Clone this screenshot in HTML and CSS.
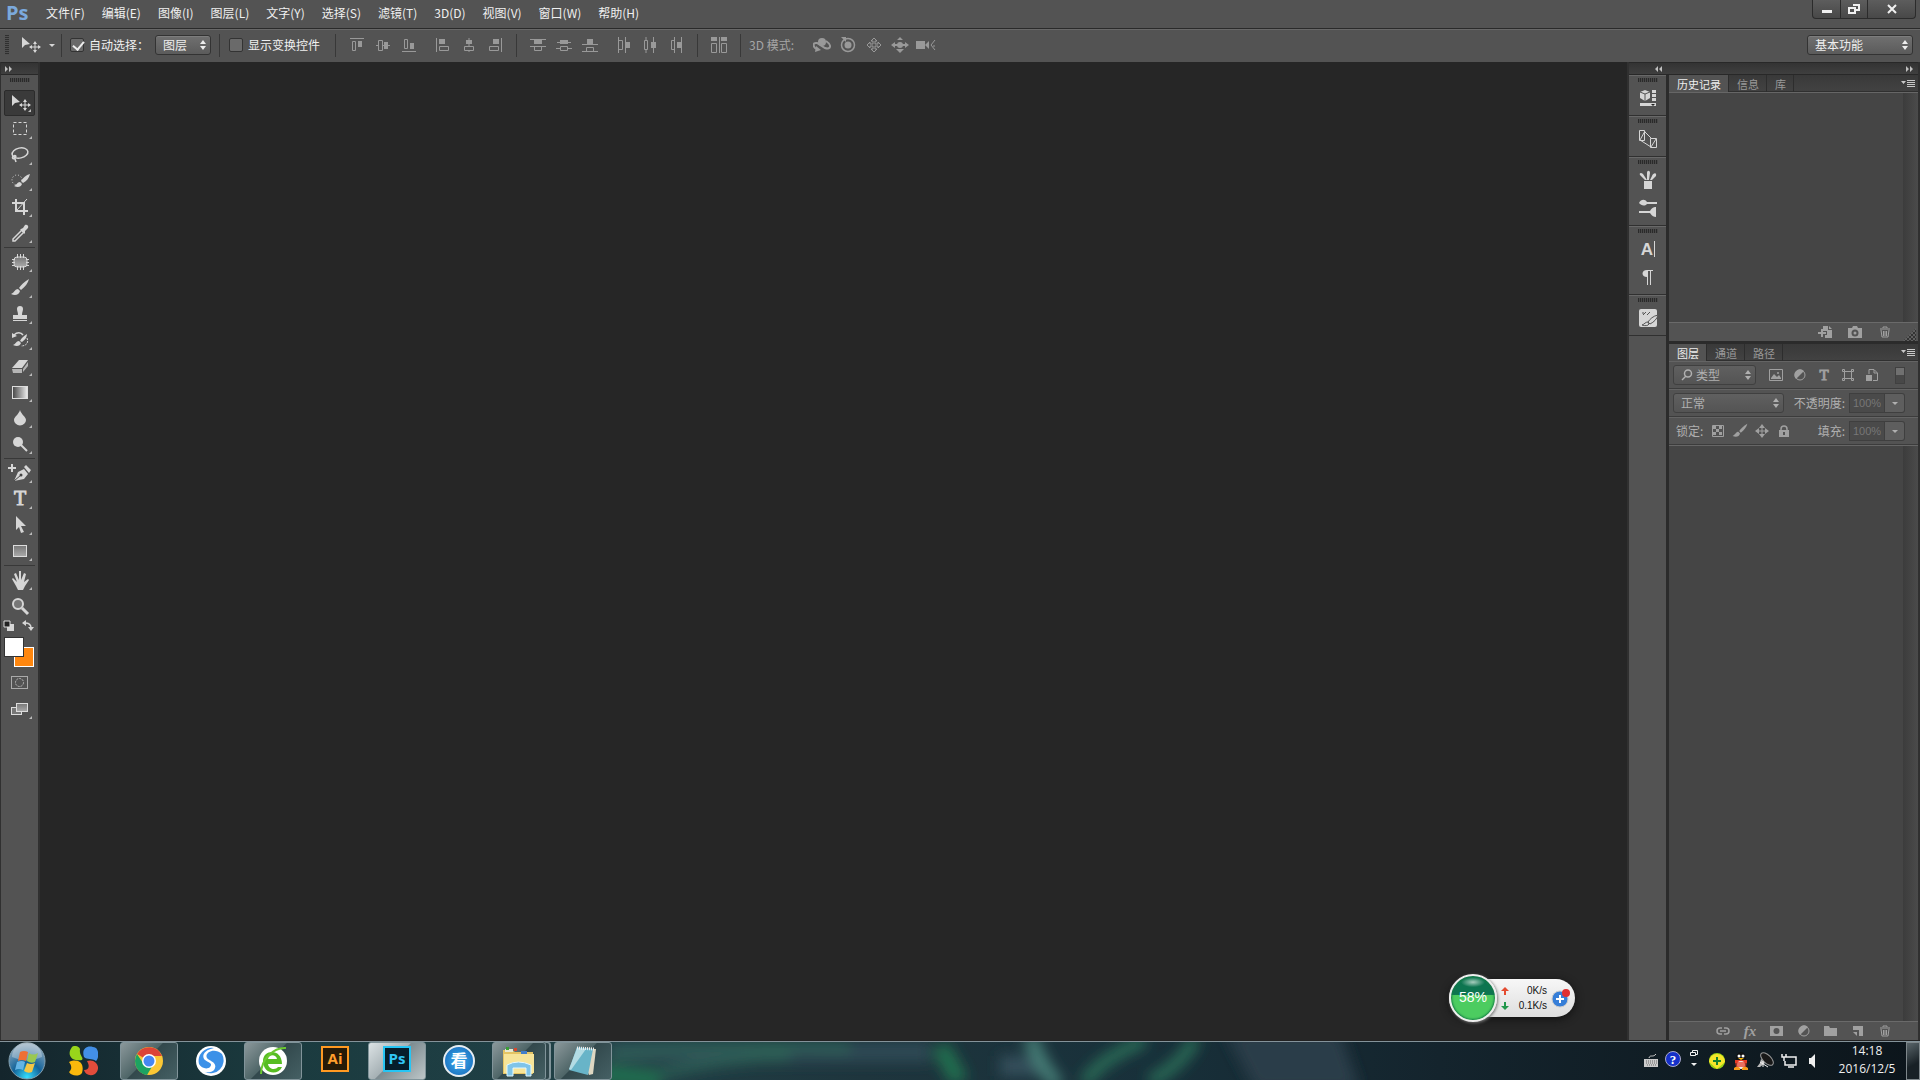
FILE: index.html
```
<!DOCTYPE html>
<html lang="zh-CN">
<head>
  <meta charset="UTF-8">
  <title>Photoshop</title>
  <link rel="stylesheet" href="styles.css">
</head>
<body>
  <!-- shared icons -->
  <svg class="defs" width="0" height="0" aria-hidden="true">
    <defs>
      <linearGradient id="fade"><stop offset="0" stop-color="#444"/><stop offset="1" stop-color="#eee"/></linearGradient>
      <linearGradient id="grey" x2="0" y2="1"><stop offset="0" stop-color="#777"/><stop offset="1" stop-color="#aaa"/></linearGradient>
      <radialGradient id="orb" cy=".95" r=".9"><stop offset="0" stop-color="#36e0ff"/><stop offset=".45" stop-color="#13639a"/><stop offset="1" stop-color="#8fa9bd"/></radialGradient>
      <filter id="soft" x="-5%" y="-50%" width="110%" height="200%"><feGaussianBlur stdDeviation="7"/></filter>
      <symbol id="updown" viewBox="0 0 6 10"><path d="M3 0L6 4H0zM3 10L0 6H6z"/></symbol>
      <symbol id="move" viewBox="0 0 22 22"><path d="M3 3v11l3-3 5-1z"/><path d="M16 8v10M11 13h10" stroke="currentColor"/><path d="M16 7l-2 3h4zM16 19l-2-3h4zM10 13l3-2v4zM22 13l-3-2v4z"/></symbol>
      <symbol id="trash" viewBox="0 0 12 12"><path d="M1 3h10M4 2V1h4v1M2 4l1 7h6l1-7M4.500 5v5M6 5v5M7.500 5v5" fill="none" stroke="currentColor"/></symbol>
      <symbol id="menu" viewBox="0 0 14 8"><path d="M0 1h5L2.500 4zM6 0h8v1H6zM6 2h8v1H6zM6 4h8v1H6zM6 6h8v1H6z"/></symbol>
      <symbol id="left2" viewBox="0 0 8 6"><path d="M3 0v6L0 3zM7 0v6L4 3z"/></symbol>
      <symbol id="right2" viewBox="0 0 8 6"><path d="M0 0v6l3-3zM4 0v6l3-3z"/></symbol>
      <symbol id="brush" viewBox="0 0 22 22"><path d="M20 2c-5 3-8 6-10 9l2 2c4-3 7-7 8-11zM9 12c-3 0-3 3-7 5 4 2 8 1 9-3z"/></symbol>
    </defs>
  </svg>

  <header class="menubar">
    <span class="logo">Ps</span>
    <nav>
      <a href="#">文件(F)</a><a href="#">编辑(E)</a><a href="#">图像(I)</a><a href="#">图层(L)</a><a href="#">文字(Y)</a><a href="#">选择(S)</a><a href="#">滤镜(T)</a><a href="#">3D(D)</a><a href="#">视图(V)</a><a href="#">窗口(W)</a><a href="#">帮助(H)</a>
    </nav>
    <div class="window-buttons">
      <button aria-label="最小化"><svg width="12" height="10"><path d="M1 6h10v3H1z"/></svg></button>
      <button aria-label="还原"><svg width="12" height="10"><path d="M5 1h6v5H7M1 4h6v5H1z" fill="none" stroke="currentColor" stroke-width="2"/></svg></button>
      <button class="close" aria-label="关闭"><svg width="10" height="10"><path d="M1 1l8 8M9 1L1 9" stroke="currentColor" stroke-width="2"/></svg></button>
    </div>
  </header>

  <section class="options">
    <i class="vgrip"></i>
    <button class="current-tool" aria-label="移动工具"><svg width="22" height="22"><use href="#move"/></svg><svg width="6" height="3"><path d="M0 0h6L3 3z"/></svg></button>
    <i class="divider first"></i>
    <label class="check"><input type="checkbox" checked>自动选择：</label>
    <span class="drop auto"><select aria-label="自动选择"><option>图层</option></select><svg width="6" height="10"><use href="#updown"/></svg></span>
    <i class="divider"></i>
    <label class="check show"><input type="checkbox">显示变换控件</label>
    <i class="divider"></i>
    <div class="align">
      <button aria-label="顶对齐"><svg width="14" height="14"><path class="o" d="M0 .5h14M2.500 3.500h3v9h-3z"/><path d="M8 3h4v6H8z"/></svg></button>
      <button aria-label="垂直居中对齐"><svg width="14" height="14"><path class="o" d="M0 7.500h3M6 7.500h8M2.500 2.500h4v10h-4z"/><path d="M8 4h4v7H8z"/></svg></button>
      <button aria-label="底对齐"><svg width="14" height="14"><path class="o" d="M0 13.500h14M2.500 1.500h3v9h-3z"/><path d="M8 5h4v6H8z"/></svg></button>
    </div>
    <div class="align">
      <button aria-label="左对齐"><svg width="14" height="14"><path class="o" d="M.5 0v14M3.500 8.500h9v4h-9z"/><path d="M3 1h6v5H3z"/></svg></button>
      <button aria-label="水平居中对齐"><svg width="14" height="14"><path class="o" d="M7 0v8M7 12v2M2.500 8.500h9v4h-9z"/><path d="M4 2h6v4H4z"/></svg></button>
      <button aria-label="右对齐"><svg width="14" height="14"><path class="o" d="M13.500 0v14M1.500 8.500h9v4h-9z"/><path d="M5 1h6v5H5z"/></svg></button>
    </div>
    <i class="divider"></i>
    <div class="align">
      <button aria-label="按顶分布"><svg width="16" height="14"><path class="o" d="M0 1.500h16M0 8.500h16M4.500 8.500h7v4h-7z"/><path d="M4 2h8v4H4z"/></svg></button>
      <button aria-label="垂直居中分布"><svg width="16" height="14"><path class="o" d="M1 4.500h14M0 10.500h4M12 10.500h4M4.500 8.500h7v4h-7z"/><path d="M4 2h8v4H4z"/></svg></button>
      <button aria-label="按底分布"><svg width="16" height="14"><path class="o" d="M0 6.500h16M0 13.500h16M4.500 9.500h7v4h-7z"/><path d="M5 1h6v5H5z"/></svg></button>
    </div>
    <div class="align">
      <button aria-label="按左分布"><svg width="14" height="16"><path class="o" d="M1.500 0v16M8.500 0v16M1.500 3.500h4v9h-4z"/><path d="M9 5h4v6H9z"/></svg></button>
      <button aria-label="水平居中分布"><svg width="14" height="16"><path class="o" d="M3 0v3M3 13v3M10.500 0v16M1.500 3.500h3v9h-3z"/><path d="M8 5h5v6H8z"/></svg></button>
      <button aria-label="按右分布"><svg width="14" height="16"><path class="o" d="M5.500 0v16M12.500 0v16M2.500 3.500h3v9h-3z"/><path d="M8 5h4v6H8z"/></svg></button>
    </div>
    <i class="divider"></i>
    <div class="align single"><button aria-label="自动对齐图层"><svg width="16" height="16"><path class="o" d="M.5 6.500h5v9h-5zM10.500 6.500h5v9h-5zM8.500 0v16"/><path d="M0 0h6v4H0zM10 0h6v4h-6z"/></svg></button></div>
    <i class="divider"></i>
    <span class="mode">3D 模式:</span>
    <div class="align">
      <button aria-label="旋转 3D 对象"><svg width="18" height="16"><circle cx="9" cy="5" r="4"/><path class="o" d="M13 4c6 4 5 9-1 7L4 6C-1 5 0 11 4 12" stroke-width="2"/><path d="M3 9l5 4-6 2z"/></svg></button>
      <button aria-label="滚动 3D 对象"><svg width="16" height="16"><circle cx="8" cy="8" r="3.500"/><circle class="s15" cx="8" cy="8" r="6.500"/><path d="M1 0h5v5z"/></svg></button>
      <button aria-label="拖动 3D 对象"><svg width="16" height="16"><path class="o" d="M8 1l3 3H9v3h3V5l3 3-3 3V9H9v3h2l-3 3-3-3h2V9H4v2L1 8l3-3v2h3V4H5z"/></svg></button>
      <button aria-label="滑动 3D 对象"><svg width="18" height="16"><circle cx="9" cy="8" r="3"/><path d="M9 0l3 3H6zM9 16l-4-4h8zM0 8l4-3v2h3v2H4v2zM18 8l-4-3v2h-3v2h3v2z"/></svg></button>
      <button aria-label="缩放 3D 对象"><svg width="20" height="14"><path d="M0 3h9v8H0zM9 7l4-4v8z"/><path class="o" d="M19 2l-4 5 4 5M18 7v2"/></svg></button>
    </div>
    <span class="drop essentials"><select aria-label="工作区"><option>基本功能</option></select><svg width="6" height="10"><use href="#updown"/></svg></span>
  </section>

  <main>
    <aside class="toolbox">
      <div class="strip"><button aria-label="展开"><svg width="8" height="6"><use href="#right2"/></svg></button></div>
      <i class="grip"></i>
      <div class="tool-group">
        <button class="tool active" aria-label="移动"><svg width="22" height="22"><use href="#move"/></svg></button>
        <button class="tool" aria-label="选框"><svg width="22" height="22"><rect x="4.500" y="4.500" width="13" height="12" fill="none" stroke="currentColor" stroke-dasharray="3 2"/></svg></button>
        <button class="tool" aria-label="套索"><svg width="22" height="22"><ellipse cx="11" cy="9" rx="8" ry="5" class="s15" transform="rotate(-12 11 9)"/><path class="s15" d="M5 12c-3 1-1 4 1 2s0-3-1-2l2 6"/></svg></button>
        <button class="tool" aria-label="快速选择"><svg width="22" height="22"><circle cx="8" cy="10" r="5" fill="none" stroke="currentColor" stroke-dasharray="1 2"/><path d="M21 4c-4 1-7 4-9 7l2 2c4-2 6-5 7-9zM11 12c-3 0-3 3-6 4 4 2 7 1 8-2z"/></svg></button>
        <button class="tool" aria-label="裁剪"><svg width="22" height="22"><path d="M7 3v12h12M3 7h12v12" fill="none" stroke="currentColor" stroke-width="2"/><path class="s1" d="M8 14l10-11"/></svg></button>
        <button class="tool" aria-label="吸管"><svg width="22" height="22"><path d="M12 7l2-1 2-3c2-1 4 1 3 3l-3 3 0 2-1 1-4-4z"/><path class="s15" d="M12 9l-8 8v2h2l8-8"/></svg></button>
      </div>
      <div class="tool-group">
        <button class="tool" aria-label="修补"><svg width="22" height="22"><rect x="5" y="6" width="13" height="10" rx="3" fill="url(#grey)" stroke="currentColor"/><path class="s1" d="M8.500 3v4M11.500 3v4M14.500 3v4M8.500 15v4M11.500 15v4M14.500 15v4M3 8.500h3M3 11.500h3M3 14.500h3M17 8.500h3M17 11.500h3M17 14.500h3"/></svg></button>
        <button class="tool" aria-label="画笔"><svg width="22" height="22"><use href="#brush"/></svg></button>
        <button class="tool" aria-label="图章"><svg width="22" height="22"><path d="M8 6a3 3 0 016 0c0 2-1 3-1 6h5v4H4v-4h5c0-3-1-4-1-6zM4 17h14v1H4z"/></svg></button>
        <button class="tool" aria-label="历史画笔"><svg width="22" height="22"><path d="M18 5c-3 2-6 4-7 7l2 1c3-2 5-5 5-8zM10 12c-3 0-3 3-6 4 4 2 7 1 8-2z"/><path class="s15" d="M5 6c3-3 7-3 9 0"/><path d="M3 4v5l5-2z"/><path class="s1" stroke-dasharray="2 1" d="M18 9c2 5-1 8-6 8"/></svg></button>
        <button class="tool" aria-label="橡皮擦"><svg width="22" height="22"><path d="M3 13l7-8h9l-6 8z"/><path d="M3 14h10v4H4zM14 14l5-7v4l-5 6z" opacity=".75"/></svg></button>
        <button class="tool" aria-label="渐变"><svg width="22" height="22"><rect x="3.500" y="5.500" width="15" height="12" fill="url(#fade)" stroke="#ddd"/></svg></button>
        <button class="tool" aria-label="模糊"><svg width="22" height="22"><path d="M11 3c1 4 6 7 6 10a5.500 5 0 01-12 0c0-3 5-6 6-10z"/></svg></button>
        <button class="tool" aria-label="减淡"><svg width="22" height="22"><circle cx="9" cy="9" r="5"/><path d="M12 12l6 6" stroke="currentColor" stroke-width="2"/></svg></button>
      </div>
      <div class="tool-group">
        <button class="tool" aria-label="钢笔"><svg width="26" height="22"><path d="M1 6h8M5 2v8" stroke="currentColor" stroke-width="2"/><path d="M7 19l4-9 6-3 4 5-4 5zM17 5l2-2 5 5-2 3z"/><path d="M7 19l7-6" stroke="#444"/><circle cx="14" cy="13" r="1.500" fill="#444"/></svg></button>
        <button class="tool" aria-label="文字"><svg width="22" height="22"><text x="11" y="17" class="t-glyph">T</text></svg></button>
        <button class="tool" aria-label="路径选择"><svg width="22" height="22"><path d="M7 2v14l3-3 2 6 3-1-3-6h5z"/></svg></button>
        <button class="tool" aria-label="矩形"><svg width="22" height="22"><rect x="4.500" y="5.500" width="13" height="11" fill="url(#grey)" stroke="#ddd"/></svg></button>
      </div>
      <div class="tool-group">
        <button class="tool" aria-label="抓手"><svg width="22" height="22"><path d="M3 10l1-1 4 4-3-8 2-1 3 7V2h2v9l3-7 2 1-2 8 4-3 1 1-4 6-2 4H9l-2-4z"/></svg></button>
        <button class="tool plain" aria-label="缩放"><svg width="22" height="22"><circle cx="9" cy="9" r="5" fill="#777" stroke="currentColor" stroke-width="2"/><path d="M13 13l6 6" stroke="currentColor" stroke-width="3"/></svg></button>
      </div>
      <div class="color-tools">
        <button aria-label="默认颜色"><svg width="12" height="12"><path d="M4 4h7v7H4z"/><path d="M1 1h6v6H1z" fill="#222" stroke="#ddd"/></svg></button>
        <button aria-label="切换颜色"><svg width="12" height="12"><path d="M0 3l4-3v6zM9 11L6 7h6z"/><path class="s15" d="M3 3c4 0 6 1 6 5"/></svg></button>
      </div>
      <div class="swatches"><button class="back" aria-label="背景色"></button><button class="front" aria-label="前景色"></button></div>
      <button class="tool plain" aria-label="快速蒙版"><svg width="18" height="14"><rect x=".5" y=".5" width="16" height="12" fill="none" stroke="#aaa"/><circle cx="8.500" cy="6.500" r="4" fill="none" stroke="#bbb" stroke-dasharray="2 1"/></svg></button>
      <button class="tool" aria-label="屏幕模式"><svg width="18" height="14"><rect x=".5" y="5.500" width="10" height="7" fill="#777" stroke="#ddd"/><rect x="5.500" y="1.500" width="11" height="8" fill="url(#grey)" stroke="#ddd"/></svg></button>
    </aside>

    <section class="canvas"></section>

    <aside class="side">
      <div class="strip side-strip">
        <button aria-label="展开面板"><svg width="8" height="6"><use href="#left2"/></svg></button>
        <button aria-label="折叠面板"><svg width="8" height="6"><use href="#right2"/></svg></button>
      </div>
      <div class="side-body">
        <div class="dock">
          <div class="dock-group"><i class="grip"></i>
            <button aria-label="3D"><svg width="20" height="20"><path d="M7 2l5 2v6l-5 3-5-3V4z"/><path d="M2 4l5 2 5-2M7 6v7" fill="none" stroke="#555"/><path d="M14 2h4v3h-4zM14 6h4v3h-4zM14 10h4v3h-4zM2 15h16v3H2z"/><path d="M13 16h4l-2 2z" fill="#222"/></svg></button>
          </div>
          <div class="dock-group"><i class="grip"></i>
            <button aria-label="仿制源"><svg width="20" height="20"><path class="s1" d="M1.500 1.500h5v10h-5zM12.500 9.500h6v9h-6zM6 2l7 7M2 11l11 7M2 11l5-9M13 18l5-8"/></svg></button>
          </div>
          <div class="dock-group"><i class="grip"></i>
            <button aria-label="画笔预设"><svg width="20" height="20"><path d="M6 11h8v8H6zM7 10L2 5c-1-2 1-3 3-1l4 6zM9 10V3c0-3 3-3 3 0l-1 7zM12 10l2-4c1-3 5-4 4 0l-4 4z"/></svg></button>
            <button aria-label="画笔"><svg width="20" height="20"><path d="M1 5c2-4 6-4 8-1h10v2H9c-3 3-6 1-8-1zM1 13h11c2-4 5-4 6-4v10c-2 0-4-1-6-4H1z"/></svg></button>
          </div>
          <div class="dock-group"><i class="grip"></i>
            <button aria-label="字符"><svg width="20" height="20"><text x="9" y="16" class="a-glyph">A</text><path class="s1" d="M16.500 2v16"/></svg></button>
            <button aria-label="段落"><svg width="20" height="20"><path d="M15 3H9C3 3 3 10 9 10v8h1V4h2v14h1V4h2z"/></svg></button>
          </div>
          <div class="dock-group"><i class="grip"></i>
            <button aria-label="样式"><svg width="20" height="20"><rect x="1" y="1" width="18" height="18" rx="2"/><path d="M4 5h2M5 7l3-3M9 7l3-3" stroke="#555"/><path d="M20 7c-5 1-8 4-10 7l2 2c4-2 7-5 8-9zM10 14c-3 0-3 2-6 3 3 1 6 1 7-1z" stroke="#555"/></svg></button>
          </div>
        </div>

        <div class="panels">
          <section class="panel history">
            <div class="tabs"><button class="on">历史记录</button><button>信息</button><button>库</button><svg class="menu-icon" width="14" height="8"><use href="#menu"/></svg></div>
            <div class="list"></div>
            <footer>
              <button aria-label="新建文档"><svg width="14" height="12"><path d="M5 0h5v4h4v8H7V9h2V5H5zM11 0l3 3h-3zM3 3h2v3h3v2H5v3H3V8H0V6h3z"/></svg></button>
              <button aria-label="新建快照"><svg width="14" height="12"><path d="M0 2h4l1-2h4l1 2h4v10H0z"/><circle cx="7" cy="7" r="2.500" fill="none" stroke="#535353" stroke-width="2"/></svg></button>
              <button aria-label="删除"><svg width="12" height="12"><use href="#trash"/></svg></button>
              <i class="resize"></i>
            </footer>
          </section>
          <section class="panel layers">
            <div class="tabs"><button class="on">图层</button><button>通道</button><button>路径</button><svg class="menu-icon" width="14" height="8"><use href="#menu"/></svg></div>
            <div class="row filter">
              <span class="drop kind"><svg class="lens" width="12" height="12"><circle cx="7" cy="4.500" r="3.500" class="s15"/><path class="s15" d="M5 7l-4 4"/></svg><select aria-label="类型"><option>类型</option></select><svg width="6" height="10"><use href="#updown"/></svg></span>
              <div class="filters">
                <button aria-label="像素"><svg width="14" height="12"><path class="s1" d="M.5.5h13v11H.5z"/><path d="M2 9l3-4 3 3 2-2 2 3v1H2z"/><circle cx="9" cy="4" r="1"/></svg></button>
                <button aria-label="调整"><svg width="12" height="12"><circle class="s1" cx="6" cy="6" r="5"/><path d="M10 2a5.500 5.500 0 00-8 8z"/></svg></button>
                <button aria-label="文字"><svg width="14" height="14"><text x="7" y="12" class="t-glyph small">T</text></svg></button>
                <button aria-label="形状"><svg width="12" height="12"><path class="s1" d="M2.500 2.500h7v7h-7zM.5.500h2v2h-2zM9.500.500h2v2h-2zM.5 9.500h2v2h-2zM9.500 9.500h2v2h-2z"/></svg></button>
                <button aria-label="智能对象"><svg width="12" height="12"><path d="M0 6h6v6H0z"/><path class="s1" d="M3 5V.5h5L11.500 4v7.500H7M8 1v3h3"/></svg></button>
              </div>
              <i class="toggle"></i>
            </div>
            <div class="row">
              <span class="drop blend"><select aria-label="混合模式"><option>正常</option></select><svg width="6" height="10"><use href="#updown"/></svg></span>
              <label class="amount">不透明度:<input type="text" value="100%" disabled></label><button class="spin" aria-label="不透明度"><svg width="6" height="3"><path d="M0 0h6L3 3z"/></svg></button>
            </div>
            <div class="row last">
              <span class="lock-label">锁定:</span>
              <div class="locks">
                <button aria-label="锁定透明像素"><svg width="12" height="12"><path class="s1" d="M.5.5h11v11H.5z"/><path d="M1 1h3v3H1zM7 1h3v3H7zM4 4h3v3H4zM1 7h3v3H1zM7 7h3v3H7z"/></svg></button>
                <button aria-label="锁定图像"><svg width="18" height="18"><use href="#brush"/></svg></button>
                <button aria-label="锁定位置"><svg width="14" height="14"><path class="s1" d="M7 2v10M2 7h10"/><path d="M7 0l3 4H4zM7 14l-3-4h6zM0 7l4-3v6zM14 7l-4-3v6z"/></svg></button>
                <button aria-label="锁定全部"><svg width="10" height="12"><path d="M0 5h10v7H0z"/><path class="s15" d="M2 6V4c0-4 6-4 6 0v2"/><path d="M4 7h2v3H4z" fill="#535353"/></svg></button>
              </div>
              <label class="amount">填充:<input type="text" value="100%" disabled></label><button class="spin" aria-label="填充"><svg width="6" height="3"><path d="M0 0h6L3 3z"/></svg></button>
            </div>
            <div class="list"></div>
            <footer>
              <button aria-label="链接图层"><svg width="14" height="8"><path class="s15" d="M6 1H4C0 1 0 7 4 7h2M8 1h2c4 0 4 6 0 6H8M4 4h6"/></svg></button>
              <button aria-label="图层样式" class="fx">fx</button>
              <button aria-label="蒙版"><svg width="14" height="12"><path d="M0 1h13v10H0z"/><circle cx="6.500" cy="6" r="3" fill="#535353"/></svg></button>
              <button aria-label="调整图层"><svg width="12" height="12"><circle class="s1" cx="6" cy="6" r="5"/><path d="M10 2a5.500 5.500 0 00-8 8z"/></svg></button>
              <button aria-label="新建组"><svg width="14" height="12"><path d="M0 1h5l1 2h7v8H0z"/></svg></button>
              <button aria-label="新建图层"><svg width="12" height="12"><path d="M1 1h10v10H7V5H1zM1 7h4v4z"/></svg></button>
              <button aria-label="删除图层"><svg width="12" height="12"><use href="#trash"/></svg></button>
            </footer>
          </section>
        </div>
      </div>
    </aside>
  </main>

  <footer class="taskbar">
    <svg class="wallpaper" viewBox="0 0 1920 38" preserveAspectRatio="none" aria-hidden="true">
      <g filter="url(#soft)" fill="none">
        <path d="M610 0h320v20H610z" fill="#2f4a55"/>
        <path d="M610 12q130-12 240-6M640 40q50-22 150-26" stroke="#2f6658" stroke-width="8"/>
        <path d="M600 32l60 6M940 4l20 36" stroke="#22704f" stroke-width="18"/>
        <path d="M1000 24h45" stroke="#36505c" stroke-width="20"/>
        <path d="M1030-6q8 26 28 50" stroke="#468078" stroke-width="14"/>
        <path d="M1085 42q10-22 60-44M1150 40q35-20 45-44" stroke="#2c7058" stroke-width="12"/>
        <path d="M1225-10l30 58h105l-20-58z" fill="#2b3e49"/>
      </g>
    </svg>
    <button class="start" aria-label="开始"><svg width="38" height="38"><circle cx="19" cy="19" r="18" fill="url(#orb)" stroke="#839fae"/><path d="M4 15a15 15 0 0130 0q-15 7-30 0z" fill="#fff" opacity=".3"/><path d="M12 10q4-2 8 0l-2 9q-4-2-8 0z" fill="#ee7034"/><path d="M21 11q4 3 9 0l-3 9q-4 2-8-1z" fill="#9ac850"/><path d="M9 20q5-2 8 0l-2 8q-4-2-8 0z" fill="#64b4e5"/><path d="M19 21q4 2 8 0l-3 9q-4 2-8-1z" fill="#f4c645"/></svg></button>
    <div class="apps">
      <button class="launcher" aria-label="启动器"><svg width="30" height="30"><path d="M4 1c-6 8 0 15 10 13 2-3-3-4-2-11-1-3-6-4-8-2z" fill="#98d51b"/><path d="M28 2c-8-4-15 0-12 9 3 3 8 1 12 4 3-3 3-10 0-13z" fill="#438fe6"/><path d="M1 16c9-4 16 1 13 11-3 4-11 3-13-1 3-3 3-6 0-10z" fill="#fbb80c"/><path d="M19 15c9-3 15 7 8 13-5 3-10 0-11-4 5 0 6-4 3-9z" fill="#e34c3b"/></svg></button>
      <button class="open" aria-label="Chrome"><svg width="30" height="30"><circle cx="15" cy="15" r="14" fill="#fbc735"/><path d="M15 15L3 8a14 14 0 0125 2H15z" fill="#dc4437"/><path d="M3 8a14 14 0 0010 21l6-10-4-4-6 2z" fill="#1da362"/><circle cx="15" cy="15" r="7" fill="#fff"/><circle cx="15" cy="15" r="5.500" fill="#4787f3"/></svg></button>
      <button aria-label="搜狗浏览器"><svg width="30" height="30"><circle cx="15" cy="15" r="15" fill="#fff"/><path d="M26 8C18 1 8 7 11 12c2 3 10 4 8 10-1 4-6 5-10 4A13 13 0 0026 8z" fill="#3c91e8"/><path d="M3 18A13 13 0 0118 2C8 4 5 10 9 14c4 3 8 3 5 7-3 3-9 1-11-3z" fill="#3c91e8"/></svg></button>
      <button class="open" aria-label="360浏览器"><svg width="30" height="30"><circle cx="15" cy="15" r="14" fill="#fff"/><path d="M24 18H10c1 6 8 6 10 3h4c-4 9-19 7-19-6C5 3 24 2 24 18zM10 13h9c-1-5-8-5-9 0z" fill="#56bd22"/><path d="M3 28C3 13 16 1 28 2" fill="none" stroke="#6bc930" stroke-width="2"/></svg></button>
      <button aria-label="Illustrator"><span class="adobe ai">Ai</span></button>
      <button class="open current" aria-label="Photoshop"><span class="adobe ps">Ps</span></button>
      <button aria-label="2345看图王"><span class="kan">看</span></button>
      <button class="open stacked" aria-label="资源管理器"><svg width="34" height="32"><path d="M1 5h9l3 2h18v22H1z" fill="#e5c463"/><path d="M3 4h8v3H3z" fill="#e9e9d0"/><path d="M4 2h3v3H4z" fill="#3a9f37"/><path d="M12 3h3v3h-3z" fill="#d6472d"/><path d="M19 6h6v3h-6z" fill="#427ecb"/><path d="M2 9h30v19H2z" fill="#f7e498"/><path d="M5 20q11-6 24 0v11h-5v-8H11v8H5z" fill="#7fc4e9" stroke="#e2f8ff"/></svg></button>
      <button class="open" aria-label="记事本"><svg width="32" height="32"><path d="M11 3l18 1-3 25-4 1z" fill="#ded7c2"/><path d="M10 2l16 2-5 26-19-5z" fill="#68b4c8"/><path d="M10 3l9 1L4 25l-2-1z" fill="#b3dce4"/><path d="M10 3l17 1" stroke="#eee" stroke-width="3" stroke-dasharray="1 1"/></svg></button>
    </div>
    <div class="tray">
      <button aria-label="键盘"><svg width="16" height="16"><path d="M1 6h14v8H1z" fill="#ccc"/><path d="M3 8h11M3 10h11M4 12h9" stroke="#666" stroke-dasharray="1 1"/><path d="M6 5c1-4 4 0 7-4" fill="none" stroke="#ccc"/></svg></button>
      <button class="help" aria-label="帮助"><svg width="16" height="20"><circle cx="8" cy="8" r="7.500" fill="#1530c9" stroke="#aac"/><text x="8" y="13">?</text></svg></button>
      <button class="restore" aria-label="语言栏"><svg width="10" height="24"><path class="s1" d="M3.500 3V1.500h5v4H6M1.500 3.500h5v3h-5z"/><path d="M2 14h6l-3 3z"/></svg></button>
      <button aria-label="360安全卫士"><svg width="16" height="16"><circle cx="8" cy="8" r="8" fill="#9bd615"/><path d="M0 9a8 8 0 0116 0L8 16z" fill="#f5e62a"/><path d="M8 4v8M4 8h8" stroke="#16812e" stroke-width="2"/></svg></button>
      <button aria-label="QQ"><svg width="16" height="18"><ellipse cx="8" cy="7" rx="5" ry="7" fill="#111"/><circle cx="6" cy="4" r="1.500" fill="#fff"/><circle cx="10" cy="4" r="1.500" fill="#fff"/><path d="M2 8h12v3H2z" fill="#e53b25"/><ellipse cx="8" cy="13" rx="4" ry="4" fill="#eee"/><path d="M1 16q3-3 6 0v2H1zM9 16q3-3 6 0v2H9z" fill="#f49a19"/><path d="M2 10h12l-1 5H3z" fill="#e53b25" opacity=".7"/><path d="M5 6h6L8 8z" fill="#fb0"/></svg></button>
      <button aria-label="卫星"><svg width="18" height="18"><ellipse cx="11" cy="7" rx="8" ry="4" transform="rotate(45 11 7)" fill="#181818" stroke="#999"/><path d="M5 7l4 4-5 4H1l3-4z" fill="#bbb"/><path d="M4 10l8 5M7 9v6" stroke="#eee"/></svg></button>
      <button aria-label="网络"><svg width="18" height="16"><path class="s15" d="M6 4h10v8H5V8M8 14h6M2 1v3h4V1M4 4v4"/></svg></button>
      <button aria-label="音量"><svg width="16" height="16"><path d="M4 5h2l4-4v14l-4-4H4z"/></svg></button>
    </div>
    <time class="clock"><span>14:18</span><span>2016/12/5</span></time>
    <button class="desktop" aria-label="显示桌面"></button>
  </footer>

  <!-- floating speed monitor -->
  <div class="monitor">
    <div class="ball">58%</div>
    <div class="speeds">
      <div><svg width="8" height="8"><path d="M4 0l4 4H5v4H3V4H0z" fill="#e44b30"/></svg><span>0K/s</span></div>
      <div><svg width="8" height="8"><path d="M4 8L0 4h3V0h2v4h3z" fill="#21974b"/></svg><span>0.1K/s</span></div>
    </div>
    <button aria-label="加速"><svg width="20" height="20"><circle cx="9" cy="11" r="8" fill="#367ed8" stroke="#ccc"/><path d="M9 7v8M5 11h8" stroke="#fff" stroke-width="2"/><circle cx="15" cy="5" r="4" fill="#e02e30"/></svg></button>
  </div>
</body>
</html>
```
FILE: styles.css
```
* {
  box-sizing: border-box;
}

body {
  margin: 0;
  height: 100vh;
  display: flex;
  flex-direction: column;
  overflow: hidden;
  background: #262626;
  color: #f0f0f0;
  font: 12px/16px "Noto Sans CJK SC", sans-serif;
}

button {
  display: flex;
  align-items: center;
  justify-content: center;
  padding: 0;
  border: 0;
  background: none;
  color: inherit;
  font: inherit;
}

svg {
  display: block;
  flex: none;
  fill: currentColor;
}

.defs {
  position: absolute;
}

.o, .s1, .s15 {
  fill: none;
  stroke: currentColor;
}

.s15 { stroke-width: 1.5; }

/* menu bar */
.menubar {
  flex: none;
  height: 29px;
  display: flex;
  align-items: center;
  padding-bottom: 2px;
  background: #535353;
  border-bottom: 1px solid #2a2a2a;
}

.logo {
  width: 31px;
  padding-left: 6px;
  color: #7ba9dc;
  font: bold 20px/26px "Open Sans", sans-serif;
}

.menubar nav {
  display: flex;
  gap: 1px;
  padding-left: 7px;
}

.menubar a {
  padding: 0 8px;
  color: #f0f0f0;
  text-decoration: none;
}

.window-buttons {
  align-self: flex-start;
  display: flex;
  height: 19px;
  margin: 0 4px 0 auto;
  border: 1px solid #2b2b2b;
  border-top: 0;
  border-radius: 0 0 4px 4px;
  background: linear-gradient(#5d5d5d, #484848);
}

.window-buttons button {
  width: 27px;
}

.window-buttons button + button {
  border-left: 1px solid #2b2b2b;
}

.window-buttons .close {
  width: 48px;
}

/* options bar */
.options {
  flex: none;
  height: 33px;
  display: flex;
  align-items: center;
  padding: 0 7px 2px 5px;
  background: #535353;
  border-top: 1px solid #686868;
}

.vgrip {
  width: 4px;
  height: 20px;
  background: repeating-linear-gradient(#303030 0 1px, #505050 1px 2px);
}

.current-tool {
  width: 52px;
  padding-left: 4px;
  gap: 8px;
  color: #d6d6d6;
}

.divider {
  width: 1px;
  height: 23px;
  margin: 0 8px;
  background: #383838;
}

.divider.first {
  margin-left: 0;
}

.check {
  display: flex;
  align-items: center;
  gap: 5px;
}

.check.show {
  margin: 0 7px 0 1px;
}

input[type="checkbox"] {
  appearance: none;
  width: 14px;
  height: 14px;
  margin: 0;
  border: 1px solid #333;
  border-radius: 2px;
  background: #6a6a6a;
}

input[type="checkbox"]:checked::before {
  content: "";
  display: block;
  width: 5px;
  height: 9px;
  margin: 0 0 0 4px;
  border: solid #eee;
  border-width: 0 2px 2px 0;
  transform: rotate(40deg);
}

.drop {
  position: relative;
  height: 20px;
  color: #eee;
}

.drop select {
  appearance: none;
  width: 100%;
  height: 20px;
  padding: 0 7px;
  border: 1px solid #333;
  border-radius: 3px;
  background: linear-gradient(#707070, #5b5b5b);
  box-shadow: inset 0 1px #7d7d7d;
  color: inherit;
  font: inherit;
}

.drop svg {
  position: absolute;
  top: 5px;
  right: 5px;
}

.auto {
  width: 56px;
  margin-left: 6px;
}

.align {
  display: flex;
  color: #999;
}

.align + .align {
  margin-left: 8px;
}

.align button {
  width: 26px;
  height: 20px;
}

.mode {
  width: 60px;
  color: #a5a5a5;
}

.essentials {
  width: 106px;
  margin-left: auto;
}

/* main area */
main {
  flex: 1;
  min-height: 0;
  display: flex;
  border-bottom: 1px solid #222;
}

.canvas {
  flex: 1;
  background: #262626;
}

.strip {
  flex: none;
  width: 100%;
  height: 13px;
  display: flex;
  align-items: center;
  padding: 0 4px;
  border: solid #282828;
  border-width: 1px 0;
  background: linear-gradient(#333, #3f3f3f);
  color: #c0c0c0;
}

.side-strip {
  justify-content: space-between;
  padding-left: 26px;
}

.grip {
  flex: none;
  width: 20px;
  height: 4px;
  background: repeating-linear-gradient(90deg, #2a2a2a 0 1px, #484848 1px 2px);
}

.toolbox {
  width: 40px;
  display: flex;
  flex-direction: column;
  align-items: center;
  background: #535353;
  border: solid #303030;
  border-width: 0 2px 0 1px;
  color: #d6d6d6;
}

.toolbox .grip {
  margin: 3px 0 8px;
}

.tool-group + .tool-group {
  margin-top: 1px;
  padding-top: 1px;
  border-top: 1px solid #383838;
}

.tool {
  position: relative;
  width: 31px;
  height: 26px;
}

.tool::after {
  content: "";
  position: absolute;
  right: 3px;
  bottom: 3px;
  border: solid transparent;
  border-width: 3px 3px 0 4px;
  border-right-color: #bbb;
}

.tool.plain::after {
  display: none;
}

.tool.active {
  background: #3a3a3a;
  border: 1px solid #2b2b2b;
  border-radius: 2px;
}

.t-glyph {
  font: 20px "Liberation Serif", serif;
  text-anchor: middle;
  stroke: currentColor;
}

.t-glyph.small {
  font-size: 15px;
}

.a-glyph {
  font: bold 17px "Liberation Sans", sans-serif;
  text-anchor: middle;
}

.color-tools {
  display: flex;
  gap: 7px;
  padding: 1px 3px 5px 0;
}

.swatches {
  display: grid;
  width: 31px;
  height: 33px;
  align-items: start;
}

.swatches button {
  grid-area: 1 / 1;
  width: 20px;
  height: 20px;
  border: 1px solid #333;
}

.swatches .front {
  background: #fff;
}

.swatches .back {
  align-self: end;
  justify-self: end;
  margin: 0 1px 3px 0;
  border-color: #fff;
  background: #ff870f;
}

/* right side */
.side {
  width: 293px;
  display: flex;
  flex-direction: column;
  border: solid #303030;
  border-width: 0 2px;
}

.side-body {
  flex: 1;
  min-height: 0;
  display: flex;
  gap: 3px;
  background: #2b2b2b;
}

.dock {
  width: 37px;
  background: #535353;
  color: #d6d6d6;
}

.dock-group {
  display: flex;
  flex-direction: column;
  align-items: center;
  padding: 2px 0 3px;
  border-top: 1px solid #686868;
  border-bottom: 1px solid #303030;
}

.dock-group .grip {
  margin-bottom: 2px;
}

.dock-group button {
  width: 36px;
  height: 28px;
}

.panels {
  flex: 1;
  display: flex;
  flex-direction: column;
  gap: 3px;
}

.panel {
  display: flex;
  flex-direction: column;
  background: #535353;
  color: #b0b0b0;
}

.layers {
  flex: 1;
}

.tabs {
  display: flex;
  height: 17px;
  background: linear-gradient(#393939, #424242);
  border-bottom: 1px solid #303030;
}

.tabs button {
  height: 17px;
  padding: 0 7px 0 8px;
  border-right: 1px solid #2d2d2d;
  color: #999;
  font-size: 11px;
}

.tabs .on {
  background: #535353;
  color: #eee;
}

.menu-icon {
  margin: 5px 3px 0 auto;
  color: #c8c8c8;
}

.list {
  border-top: 1px solid #666;
  background: linear-gradient(90deg, #3c3c3c, #4b4b4b) right / 15px 100% no-repeat #454545;
}

.history .list {
  height: 230px;
}

.layers .list {
  flex: 1;
}

.panel footer {
  height: 19px;
  display: flex;
  align-items: center;
  justify-content: flex-end;
  gap: 3px;
  padding-right: 21px;
  border-top: 1px solid #6a6a6a;
  color: #a0a0a0;
}

.panel footer button {
  width: 24px;
}

.history footer {
  gap: 6px;
  padding-right: 2px;
}

.fx {
  font: italic bold 15px/16px "Liberation Serif", serif;
}

.resize {
  align-self: flex-end;
  width: 13px;
  height: 13px;
  background: repeating-conic-gradient(#333 0 25%, #606060 0 50%) 0 0 / 4px 4px;
  clip-path: polygon(100% 0, 100% 100%, 0 100%);
}

.row {
  height: 28px;
  display: flex;
  align-items: center;
  padding: 0 13px 0 4px;
  border-top: 1px solid #646464;
  border-bottom: 1px solid #3c3c3c;
}

.row .drop {
  color: #b0b0b0;
}

.row .drop select {
  background: linear-gradient(#606060, #545454);
  border-color: #404040;
  box-shadow: none;
}

.kind {
  width: 83px;
}

.row .drop.kind select {
  padding-left: 22px;
}

.kind .lens {
  top: 4px;
  left: 8px;
}

.filters {
  display: flex;
  margin-left: 8px;
  color: #a0a0a0;
}

.filters button {
  width: 24px;
}

.toggle {
  width: 10px;
  height: 17px;
  margin-left: auto;
  border: 1px solid #404040;
  background: linear-gradient(#707070 50%, #484848 50%);
}

.blend {
  width: 111px;
}

.amount {
  display: flex;
  align-items: center;
  gap: 4px;
  margin-left: auto;
}

.amount input {
  width: 36px;
  height: 20px;
  padding: 0 3px;
  border: 1px solid #3f3f3f;
  background: #4a4a4a;
  color: #777;
  font: 11px "Liberation Sans", sans-serif;
}

.spin {
  width: 20px;
  height: 20px;
  border: 1px solid #3f3f3f;
  border-left: 0;
  border-radius: 0 3px 3px 0;
  background: #5e5e5e;
}

.lock-label {
  padding-left: 3px;
}

.locks {
  display: flex;
  margin-left: 4px;
  color: #a0a0a0;
}

.locks button {
  width: 22px;
}

/* taskbar */
.taskbar {
  position: relative;
  flex: none;
  height: 39px;
  display: flex;
  align-items: stretch;
  border-top: 1px solid #84939a;
  background: linear-gradient(90deg, #14252c, #1b3b3f 15%, #204046 30%, #1e353d 45%, #18303a 60%, #14242d 75%, #0c151b);
}

.wallpaper {
  position: absolute;
  inset: 0;
  width: 100%;
  height: 100%;
}

.taskbar button {
  position: relative;
}

.start {
  width: 54px;
}

.apps {
  display: flex;
  gap: 4px;
}

.apps button {
  width: 58px;
  height: 38px;
}

.apps .launcher {
  margin-right: 4px;
}

.apps .open {
  border: 1px solid #81949a;
  border-radius: 3px;
  background: linear-gradient(135deg, #8b989b, #4e6567 45%, #32484c 46%, #456064);
}

.apps .current {
  background: linear-gradient(135deg, #dce3e5, #a5b0b4 45%, #7d8b90 46%, #bdc7c9);
}

.apps .stacked {
  width: 54px;
  margin-right: 4px;
  box-shadow: 4px 0 0 -1px #30474c, 5px 0 #81949a;
}

.adobe {
  width: 28px;
  height: 26px;
  margin-bottom: 4px;
  border: 2px solid #ff9a22;
  background: #261b08;
  color: #ff9f2c;
  font: bold 15px/20px "Open Sans", sans-serif;
}

.ps {
  border-color: #26c5f4;
  background: #061e2b;
  color: #31c6f5;
}

.kan {
  width: 32px;
  height: 32px;
  border: 2px solid #e7eef3;
  border-radius: 50%;
  background: radial-gradient(#3badee, #1665b6);
  color: #fff;
  font-size: 17px;
  font-weight: bold;
  line-height: 26px;
}

.tray {
  position: relative;
  display: flex;
  align-items: center;
  gap: 1px;
  margin-left: auto;
}

.tray button {
  width: 23px;
  height: 34px;
}

.tray .restore {
  width: 20px;
}

.tray .help {
  width: 20px;
}

.help text {
  fill: #fff;
  font: bold 13px "Liberation Serif", serif;
  text-anchor: middle;
}

.clock {
  position: relative;
  width: 82px;
  padding-left: 4px;
  display: flex;
  flex-direction: column;
  align-items: center;
  font: 12px/18px "Open Sans", sans-serif;
}

.desktop {
  width: 14px;
  border: 1px solid #7e878b;
  background: linear-gradient(150deg, #59656a, #182126 60%);
}

/* floating widget */
.monitor {
  position: absolute;
  right: 345px;
  bottom: 63px;
  width: 126px;
  height: 38px;
  display: flex;
  align-items: center;
  border-radius: 19px;
  background: linear-gradient(#f7f7f7, #dedede);
  box-shadow: 0 2px 8px #111;
  color: #111;
  font: 10px/15px "Liberation Sans", sans-serif;
}

.ball {
  width: 48px;
  height: 48px;
  border: 2px solid #eee;
  border-radius: 50%;
  background: radial-gradient(ellipse 12px 5px at 50% 14%, #a6cdbd, transparent), linear-gradient(#0d7550 42%, #4ccc60 43%);
  box-shadow: inset 0 0 2px 1px #147b46, 1px 1px 3px #777;
  color: #fff;
  font-size: 14px;
  line-height: 42px;
  text-align: center;
}

.speeds {
  width: 46px;
  margin: 0 4px;
}

.speeds div {
  display: flex;
  align-items: center;
  justify-content: space-between;
}
```
